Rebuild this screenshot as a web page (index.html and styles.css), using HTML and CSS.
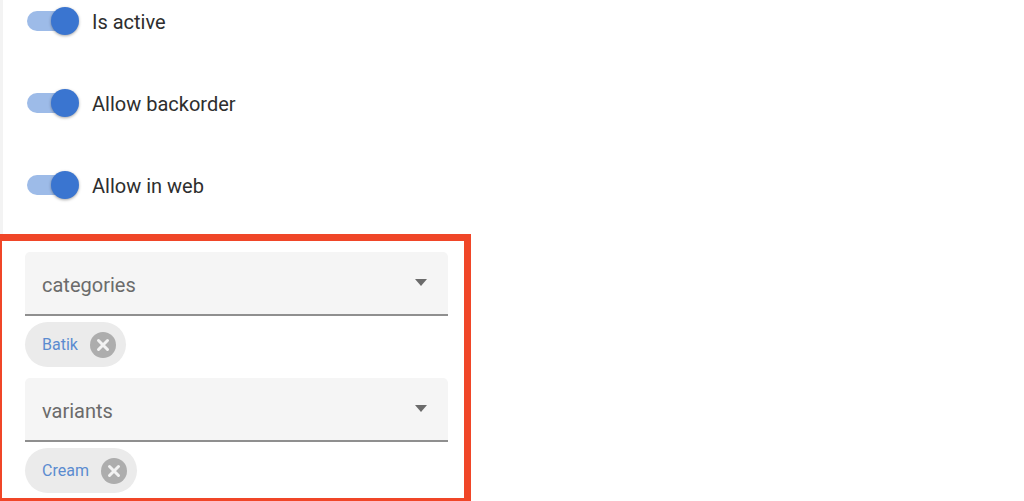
FILE: index.html
```html
<!DOCTYPE html>
<html lang="en">
<head>
<meta charset="utf-8">
<title>Product form</title>
<link rel="stylesheet" href="styles.css">
</head>
<body>
<main class="page">
  <div class="toggles">
    <label class="toggle-row"><span class="switch"><span class="thumb"></span></span><span class="toggle-label">Is active</span></label>
    <label class="toggle-row"><span class="switch"><span class="thumb"></span></span><span class="toggle-label">Allow backorder</span></label>
    <label class="toggle-row"><span class="switch"><span class="thumb"></span></span><span class="toggle-label">Allow in web</span></label>
  </div>
  <section class="highlight">
    <div class="select"><span class="select-label">categories</span><svg class="caret" width="12" height="7" viewBox="0 0 12 7"><polygon points="0,0 12,0 6,7"/></svg></div>
    <div class="chip"><span class="chip-text">Batik</span><svg class="chip-x" width="26" height="26" viewBox="0 0 26 26"><circle class="chip-x-bg" cx="13" cy="13" r="13"/><path class="chip-x-mark" d="M8.5 8.5 L17.5 17.5 M17.5 8.5 L8.5 17.5"/></svg></div>
    <div class="select select-second"><span class="select-label">variants</span><svg class="caret" width="12" height="7" viewBox="0 0 12 7"><polygon points="0,0 12,0 6,7"/></svg></div>
    <div class="chip"><span class="chip-text">Cream</span><svg class="chip-x" width="26" height="26" viewBox="0 0 26 26"><circle class="chip-x-bg" cx="13" cy="13" r="13"/><path class="chip-x-mark" d="M8.5 8.5 L17.5 17.5 M17.5 8.5 L8.5 17.5"/></svg></div>
  </section>
</main>
</body>
</html>
```

FILE: styles.css
```css
* { box-sizing: border-box; }
html, body { margin: 0; height: 501px; overflow: hidden; background: #fff; }
body { font-family: Roboto, "Liberation Sans", sans-serif; color: #2e2e2e; }
.page { width: 1024px; height: 501px; overflow: hidden; }
.toggles {
  width: 471px;
  height: 234px;
  display: flex;
  flex-direction: column;
  gap: 40px;
  border-left: 3px solid #f3f3f3;
  padding-left: 24px;
}
.toggle-row { display: flex; align-items: center; height: 42px; }
.switch {
  position: relative;
  display: block;
  width: 38px;
  height: 20px;
  border-radius: 10px;
  background: #9dbbe8;
  margin-right: 27px;
}
.thumb {
  position: absolute;
  left: 24px;
  top: -4px;
  width: 28px;
  height: 28px;
  border-radius: 50%;
  background: #3a75d0;
  box-shadow: 0 1px 3px rgba(0,0,0,.35);
}
.toggle-label { font-size: 20px; line-height: 24px; padding-top: 1px; }
.highlight {
  width: 471px;
  height: 271px;
  border: 7px solid #f04628;
  border-left-width: 2px;
  padding: 11px 16px 0 23px;
}
.select {
  height: 64px;
  background: #f5f5f5;
  border-bottom: 2px solid #8f8f8f;
  border-radius: 5px 5px 0 0;
  padding: 0 21px 0 17px;
  display: flex;
  align-items: center;
  justify-content: space-between;
}
.select-second { margin-top: 11px; }
.select-label { font-size: 20px; line-height: 24px; color: #6b6b6b; padding-top: 4px; }
.caret { display: block; margin-top: -1px; }
.caret polygon { fill: #6b6b6b; }
.chip {
  display: inline-flex;
  vertical-align: top;
  align-items: center;
  height: 45px;
  margin-top: 6px;
  padding: 0 10px 0 17px;
  gap: 12px;
  border-radius: 23px;
  background: #ebebeb;
}
.chip-text { font-size: 16px; line-height: 20px; color: #5b8bd0; }
.chip-x { display: block; }
.chip-x-bg { fill: #adadad; }
.chip-x-mark { stroke: #f2f2f2; stroke-width: 3; stroke-linecap: round; fill: none; }
```
